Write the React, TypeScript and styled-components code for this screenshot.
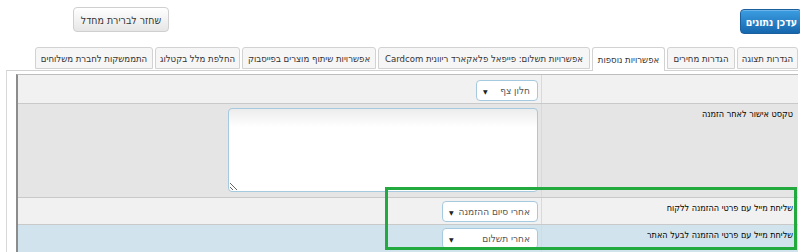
import React from "react";
import styled, { createGlobalStyle } from "styled-components";

const GlobalStyle = createGlobalStyle`
  html, body { margin: 0; padding: 0; background: #fff; overflow: hidden; }
  body { font-family: "DejaVu Sans Condensed", "Liberation Sans", Arial, sans-serif; width: 800px; height: 252px; }
`;

const Page = styled.div`
  position: relative;
  width: 800px;
  height: 252px;
  direction: rtl;
  overflow: hidden;
`;

const Header = styled.div`
  display: flex;
  justify-content: space-between;
  align-items: flex-start;
  padding: 7px 0 0 73px;
  margin-right: -2px;
  height: 26px;
`;

const PrimaryButton = styled.button`
  margin-top: 2px;
  height: 25px;
  padding: 0 4px 0 5px;
  border: 1px solid #1b5f9e;
  border-radius: 4px;
  background: linear-gradient(#3c9ee2, #1667ad);
  color: #fff;
  font-family: "DejaVu Sans Condensed", "Liberation Sans", sans-serif;
  font-weight: bold;
  font-size: 10.5px;
  white-space: nowrap;
  direction: rtl;
  box-shadow: inset 0 1px 0 rgba(255,255,255,0.25);
`;

const SecondaryButton = styled.button`
  height: 25px;
  width: 96px;
  padding: 0;
  border: 1px solid #cfcfcf;
  border-radius: 4px;
  background: linear-gradient(#ffffff, #e6e6e6);
  color: #333;
  font-family: "DejaVu Sans Condensed", "Liberation Sans", sans-serif;
  font-size: 10.5px;
  white-space: nowrap;
  direction: rtl;
`;

const TabBar = styled.div`
  display: flex;
  gap: 2px;
  margin-top: 14px;
  padding-right: 2px;
  height: 23px;
  align-items: stretch;
`;

const Tab = styled.div<{ $active?: boolean; $w: number }>`
  width: ${p => p.$w}px;
  box-sizing: border-box;
  display: flex;
  align-items: center;
  justify-content: center;
  white-space: nowrap;
  border: 1px solid #d2d2d2;
  border-bottom: ${p => (p.$active ? "none" : "1px solid #d2d2d2")};
  border-radius: 3px 3px 0 0;
  background: ${p => (p.$active ? "#fff" : "#f6f6f6")};
  color: #333;
  font-size: 9.5px;
  height: ${p => (p.$active ? "24px" : "22px")};
  position: relative;
  z-index: ${p => (p.$active ? 2 : 1)};
`;

const Panel = styled.div`
  margin: 0 2px 0 6px;
  border-top: 1px solid #d2d2d2;
  border-left: 1px solid #d8d8d8;
  padding: 3px 0 0 9px;
`;

const Table = styled.div`
  border-top: 1px solid #bdbdbd;
  border-left: 2px solid #8c8c8c;
`;

const Row = styled.div<{ $bg: string; $h: number }>`
  display: grid;
  grid-template-columns: 257px 1fr;
  height: ${p => p.$h}px;
  background: ${p => p.$bg};
  border-bottom: 1px solid #c9c9c9;
  box-sizing: border-box;
`;

const LabelCell = styled.div`
  border-left: 1px solid #d9d9d9;
  padding: 5px 5px 0 0;
  font-size: 9px;
  color: #000;
  white-space: nowrap;
`;

const ValueCell = styled.div<{ $pt: number }>`
  padding: ${p => p.$pt}px 3px 0 0;
`;

const SelectBox = styled.div<{ $w: number }>`
  width: ${p => p.$w}px;
  height: 21px;
  box-sizing: border-box;
  border: 1px solid #a5c9de;
  border-radius: 4px;
  background: #fff;
  display: flex;
  align-items: center;
  justify-content: space-between;
  padding: 0 7px 0 6px;
  font-size: 10px;
  color: #555;
  white-space: nowrap;
`;

const Arrow = styled.span`
  font-family: "DejaVu Sans", sans-serif;
  font-size: 6px;
  color: #222;
  margin-top: 1px;
`;

const TextArea = styled.textarea`
  display: block;
  width: 310px;
  height: 84px;
  box-sizing: border-box;
  border: 1px solid #a5c9de;
  border-radius: 4px;
  background: linear-gradient(#ececec, #ffffff 18px, #ffffff);
  direction: rtl;
  margin: 0;
  outline: none;
`;

const Highlight = styled.div`
  position: absolute;
  left: 385px;
  top: 187px;
  width: 412px;
  height: 63px;
  box-sizing: border-box;
  border: 3px solid #23aa3f;
  pointer-events: none;
`;

const tabs = [
  { t: "הגדרות תצוגה", w: 61 },
  { t: "הגדרות מחירים", w: 68 },
  { t: "אפשרויות נוספות", w: 73, active: true },
  { t: "אפשרויות תשלום: פייפאל פלאקארד ריוונית Cardcom", w: 212 },
  { t: "אפשרויות שיתוף מוצרים בפייסבוק", w: 134 },
  { t: "החלפת מלל בקטלוג", w: 85 },
  { t: "התממשקות לחברת משלוחים", w: 118 },
];

function Select({ w, value }: { w: number; value: string }) {
  return (
    <SelectBox $w={w}>
      <span>{value}</span>
      <Arrow>▼</Arrow>
    </SelectBox>
  );
}

export default function App() {
  return (
    <>
      <GlobalStyle />
      <Page>
        <Header>
          <PrimaryButton>עדכן נתונים</PrimaryButton>
          <SecondaryButton>שחזר לברירת מחדל</SecondaryButton>
        </Header>
        <TabBar>
          {tabs.map(tab => (
            <Tab key={tab.t} $w={tab.w} $active={tab.active}>
              {tab.t}
            </Tab>
          ))}
        </TabBar>
        <Panel>
          <Table>
            <Row $bg="#f1f1f1" $h={29}>
              <LabelCell />
              <ValueCell $pt={5}>
                <Select w={62} value="חלון צף" />
              </ValueCell>
            </Row>
            <Row $bg="#e5e5e5" $h={94}>
              <LabelCell>טקסט אישור לאחר הזמנה</LabelCell>
              <ValueCell $pt={4}>
                <TextArea />
              </ValueCell>
            </Row>
            <Row $bg="#f1f1f1" $h={27}>
              <LabelCell>שליחת מייל עם פרטי ההזמנה ללקוח</LabelCell>
              <ValueCell $pt={3}>
                <Select w={96} value="אחרי סיום ההזמנה" />
              </ValueCell>
            </Row>
            <Row $bg="#d1e4ee" $h={28}>
              <LabelCell>שליחת מייל עם פרטי ההזמנה לבעל האתר</LabelCell>
              <ValueCell $pt={3}>
                <Select w={96} value="אחרי תשלום" />
              </ValueCell>
            </Row>
          </Table>
        </Panel>
        <Highlight />
      </Page>
    </>
  );
}
